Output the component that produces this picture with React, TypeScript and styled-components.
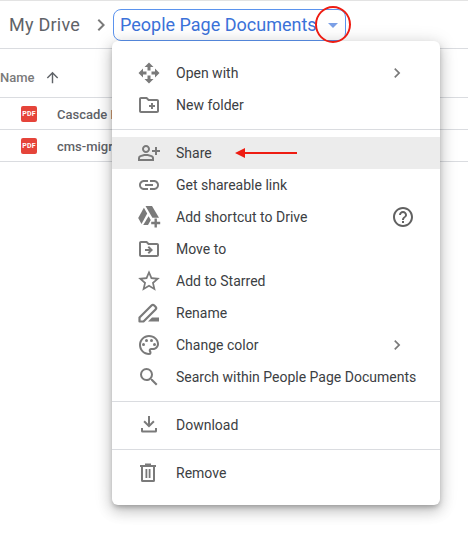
import React from "react";
import styled, { createGlobalStyle } from "styled-components";
import {
  MdOutlineCreateNewFolder,
  MdOutlinePersonAddAlt,
  MdLink,
  MdOutlineDriveFileMove,
  MdStarBorder,
  MdOutlinePalette,
  MdSearch,
  MdHelpOutline,
  MdChevronRight,
  MdArrowUpward,
} from "react-icons/md";

const GlobalStyle = createGlobalStyle`
  html, body {
    margin: 0;
    padding: 0;
    background: #fff;
    overflow: hidden;
  }
  * {
    box-sizing: border-box;
  }
`;

const OpenWithIcon = () => (
  <svg width="26" height="26" viewBox="0 0 26 26" fill="#7a7a7a">
    <path d="M13 2.500l4.500 4.500H14.500v3.500h-3V7H8.500z" />
    <path d="M13 23.500l4.500-4.500H14.500v-3.500h-3V19H8.500z" />
    <path d="M2.500 13L7 8.500v3h3.500v3H7v3z" />
    <path d="M23.500 13L19 8.500v3h-3.500v3H19v3z" />
  </svg>
);

const AddToDriveIcon = () => (
  <svg width="26" height="26" viewBox="0 0 26 26" fill="#7a7a7a">
    <path d="M9.500 2h6.500l7 11.800h-6.600z" />
    <path d="M7.900 3.800l3.300 5.800L5.500 20 2.200 14z" />
    <path d="M12.600 12.200l2.200 3.800-2.800 5H7.200z" />
    <path d="M18.500 14.500h2.400v3.300h3.300v2.400h-3.300v3.300h-2.400v-3.300h-3.300v-2.400h3.300z" />
  </svg>
);

const RenameIcon = () => (
  <svg width="24" height="24" viewBox="0 0 24 24" fill="none">
    <path
      d="M2.500 20.500v-4L14.500 4.500a2 2 0 0 1 2.800 0l1.200 1.200a2 2 0 0 1 0 2.800L6.500 20.500z"
      stroke="#7a7a7a"
      strokeWidth="2.200"
      strokeLinejoin="round"
    />
    <path d="M15 16.500h7v4H11z" fill="#7a7a7a" />
  </svg>
);

const DownloadIcon = () => (
  <svg width="24" height="24" viewBox="0 0 24 24" fill="#7a7a7a">
    <path d="M11 3h2v7.800l3.200-3.200 1.400 1.400-5.600 5.600L6.400 9l1.400-1.400 3.200 3.200z" />
    <path d="M4 15h2v2.500h12V15h2v3a1.500 1.500 0 0 1-1.500 1.500h-13A1.500 1.500 0 0 1 4 18z" />
  </svg>
);

const RemoveIcon = () => (
  <svg width="26" height="26" viewBox="0 0 26 26" fill="#7a7a7a">
    <path d="M4 5h16v2H4z" />
    <path d="M9 3.500h6V5H9z" />
    <path d="M5 7h2v13h10V7h2v13.500a1.500 1.500 0 0 1-1.500 1.500h-11A1.500 1.500 0 0 1 5 20.500z" />
    <path d="M9.500 9h1.800v9H9.500zM12.700 9h1.800v9h-1.800z" />
  </svg>
);

const menuGroups = [
  [
    { label: "Open with", icon: <OpenWithIcon />, more: true },
    { label: "New folder", icon: <MdOutlineCreateNewFolder /> },
  ],
  [
    { label: "Share", icon: <MdOutlinePersonAddAlt />, active: true },
    { label: "Get shareable link", icon: <MdLink /> },
    { label: "Add shortcut to Drive", icon: <AddToDriveIcon />, help: true },
    { label: "Move to", icon: <MdOutlineDriveFileMove /> },
    { label: "Add to Starred", icon: <MdStarBorder size={26} /> },
    { label: "Rename", icon: <RenameIcon /> },
    { label: "Change color", icon: <MdOutlinePalette />, more: true },
    { label: "Search within People Page Documents", icon: <MdSearch /> },
  ],
  [{ label: "Download", icon: <DownloadIcon /> }],
  [{ label: "Remove", icon: <RemoveIcon /> }],
];

export default function App() {
  return (
    <Page>
      <GlobalStyle />
      <Header>
        <RootCrumb>My Drive</RootCrumb>
        <CrumbArrow>
          <MdChevronRight />
        </CrumbArrow>
        <FolderPill>
          <FolderName>People Page Documents</FolderName>
          <Caret />
          <RedCircle />
        </FolderPill>
      </Header>
      <ColumnHeader>
        <NameLabel>Name</NameLabel>
        <SortArrow>
          <MdArrowUpward />
        </SortArrow>
      </ColumnHeader>
      <FileRow>
        <PdfBadge>PDF</PdfBadge>
        <FileName>Cascade Design</FileName>
      </FileRow>
      <FileRow>
        <PdfBadge>PDF</PdfBadge>
        <FileName>cms-migration</FileName>
      </FileRow>
      <Menu>
        {menuGroups.map((group, i) => (
          <MenuGroup key={i} $first={i === 0}>
            {group.map((item) => (
              <MenuItem key={item.label} $active={item.active}>
                <ItemIcon>{item.icon}</ItemIcon>
                <ItemLabel>{item.label}</ItemLabel>
                {item.active && (
                  <RedArrow width="62" height="10" viewBox="0 0 62 10">
                    <path d="M0 5l10-5v4h52v2H10v4z" fill="#ee1c12" />
                  </RedArrow>
                )}
                {item.more && (
                  <MoreIcon>
                    <MdChevronRight />
                  </MoreIcon>
                )}
                {item.help && (
                  <HelpIcon>
                    <MdHelpOutline />
                  </HelpIcon>
                )}
              </MenuItem>
            ))}
          </MenuGroup>
        ))}
      </Menu>
    </Page>
  );
}

const Page = styled.div`
  position: relative;
  width: 468px;
  height: 539px;
  overflow: hidden;
  background: #fff;
  border-top: 1px solid #e3e3e3;
  font-family: Roboto, "Liberation Sans", sans-serif;
`;

const Header = styled.div`
  height: 48px;
  display: flex;
  align-items: flex-start;
  padding: 8px 0 0 9px;
  border-bottom: 1px solid #dadce0;
`;

const RootCrumb = styled.div`
  width: 79px;
  font-size: 18px;
  line-height: 32px;
  letter-spacing: 0.25px;
  color: #5f6368;
`;

const CrumbArrow = styled.div`
  width: 25px;
  height: 32px;
  display: flex;
  align-items: center;
  justify-content: center;
  font-size: 24px;
  color: #7a7a7a;
`;

const FolderPill = styled.div`
  position: relative;
  width: 233px;
  height: 32px;
  padding-left: 6px;
  display: flex;
  align-items: center;
  border: 1px solid #5b93ee;
  border-radius: 8px;
`;

const FolderName = styled.div`
  font-size: 18px;
  line-height: 30px;
  color: #3b72d9;
  white-space: nowrap;
`;

const Caret = styled.div`
  position: absolute;
  right: 7px;
  top: 13px;
  width: 0;
  height: 0;
  border-left: 5px solid transparent;
  border-right: 5px solid transparent;
  border-top: 5px solid #7b9fe6;
`;

const RedCircle = styled.div`
  position: absolute;
  z-index: 2;
  left: 201px;
  top: -4px;
  width: 36px;
  height: 37px;
  border: 2px solid #ee1c12;
  border-radius: 50%;
`;

const ColumnHeader = styled.div`
  height: 49px;
  display: flex;
  align-items: center;
  padding: 8px 0 0 0;
  border-bottom: 1px solid #dadce0;
`;

const NameLabel = styled.div`
  font-size: 13px;
  font-weight: 500;
  color: #7a7a7a;
`;

const SortArrow = styled.div`
  display: flex;
  margin-left: 9px;
  font-size: 17px;
  color: #5f6368;
`;

const FileRow = styled.div`
  height: 32px;
  display: flex;
  align-items: center;
  padding: 1px 0 0 21px;
  border-bottom: 1px solid #dadce0;
`;

const PdfBadge = styled.div`
  width: 16px;
  height: 16px;
  border-radius: 2px;
  background: #e5443a;
  color: #fff;
  font-size: 7px;
  font-weight: 700;
  line-height: 16px;
  letter-spacing: 0.2px;
  text-align: center;
`;

const FileName = styled.div`
  margin-left: 20px;
  font-size: 13px;
  font-weight: 500;
  color: #5f6368;
  white-space: nowrap;
`;

const Menu = styled.div`
  position: absolute;
  left: 112px;
  top: 40px;
  width: 328px;
  height: 464px;
  padding: 16px 0;
  background: #fff;
  border-radius: 6px;
  box-shadow: 0 3px 5px -1px rgba(0, 0, 0, 0.25), 0 6px 14px 1px rgba(0, 0, 0, 0.16),
    0 2px 18px 2px rgba(0, 0, 0, 0.1);
`;

const MenuGroup = styled.div<{ $first?: boolean }>`
  ${({ $first }) =>
    !$first &&
    `
    margin-top: 8px;
    padding-top: 7px;
    border-top: 1px solid #dadce0;
  `}
`;

const MenuItem = styled.div<{ $active?: boolean }>`
  position: relative;
  height: 32px;
  display: flex;
  align-items: center;
  padding-left: 24px;
  background: ${({ $active }) => ($active ? "#ececec" : "transparent")};
`;

const ItemIcon = styled.div`
  width: 26px;
  height: 26px;
  display: flex;
  align-items: center;
  justify-content: center;
  font-size: 24px;
  color: #7a7a7a;
`;

const ItemLabel = styled.div`
  margin-left: 14px;
  font-size: 14px;
  color: #3c4043;
  white-space: nowrap;
`;

const RedArrow = styled.svg`
  position: absolute;
  left: 123px;
  top: 11px;
`;

const MoreIcon = styled.div`
  position: absolute;
  left: 275px;
  top: 6px;
  display: flex;
  font-size: 20px;
  color: #7a7a7a;
`;

const HelpIcon = styled.div`
  position: absolute;
  left: 279px;
  top: 4px;
  display: flex;
  font-size: 24px;
  color: #616161;
`;
